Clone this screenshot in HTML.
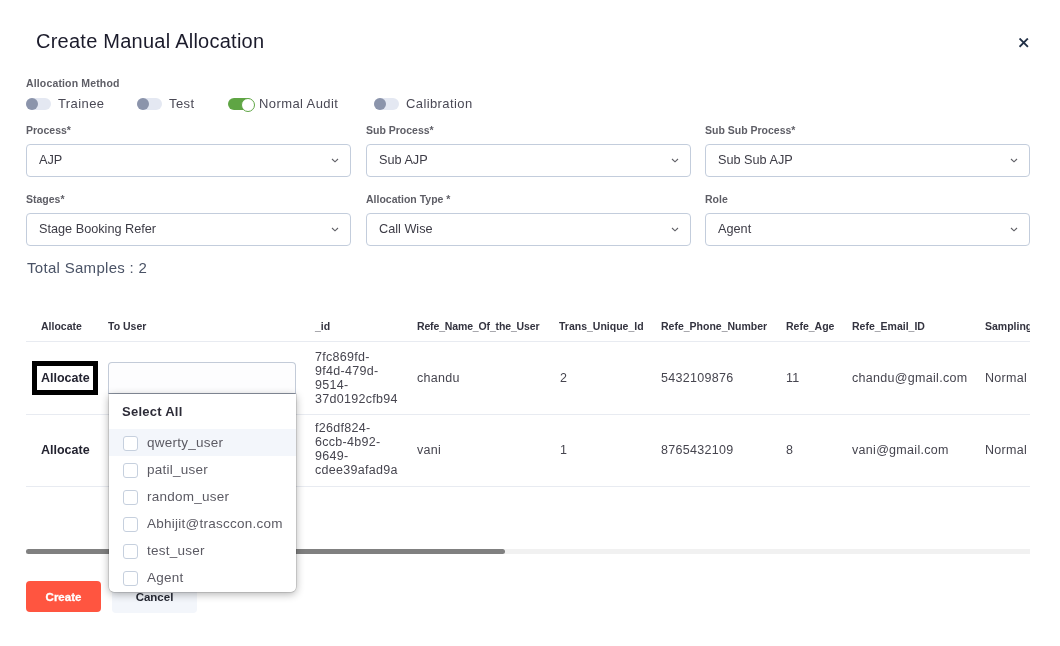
<!DOCTYPE html>
<html><head><meta charset="utf-8">
<style>
*{box-sizing:border-box;margin:0;padding:0}
html{background:#fff}
body{will-change:transform;background:transparent}
html,body{width:1060px;height:646px;overflow:hidden;font-family:"Liberation Sans",sans-serif;color:#333}
.abs{position:absolute;white-space:nowrap}
.title{left:36px;top:30px;font-size:20px;letter-spacing:.25px;color:#1b1b2b;line-height:22px}
.close{left:1019px;top:38px;width:10px;height:10px}
.lbl{font-size:10.5px;font-weight:bold;color:#5e5e66;line-height:13px}
.tog{position:absolute;width:25px;height:12px;border-radius:6px;background:#e4e8f2}
.tog::after{content:"";position:absolute;left:0;top:0;width:12px;height:12px;border-radius:50%;background:#8b94ab}
.tog.on{background:#5fa544}
.tog.on::after{left:13px;background:#fff;border:1px solid #5fa544;}
.tlab{font-size:13px;letter-spacing:.4px;color:#4a4955;line-height:15px}
.sel{position:absolute;height:33px;border:1px solid #c3cddc;border-radius:4px;background:#fff}
.sel span{position:absolute;left:12px;top:8px;font-size:12.7px;color:#3d3c46;line-height:15px}
.sel svg{position:absolute;right:11px;top:13px}
.total{left:27px;top:259px;font-size:15px;letter-spacing:.3px;color:#4a5366;line-height:17px}
.th{font-size:10.5px;font-weight:bold;color:#33333f;line-height:12px;top:320px}
.hline{position:absolute;left:26px;width:1004px;height:1px;background:#e8ebf1}
.td{font-size:12.5px;letter-spacing:.3px;color:#46454f;line-height:14px}
.alloc{font-size:12.5px;font-weight:bold;color:#232330;line-height:14px}
.item{position:absolute;left:14px;height:15px;width:170px}
.item i{position:absolute;left:0;top:0;width:15px;height:15px;border:1px solid #c6d0de;border-radius:3px;background:#fff}
.item span{position:absolute;left:24px;top:-1px;font-size:13.5px;letter-spacing:.25px;color:#5b5a63;line-height:16px;white-space:nowrap}
</style></head><body>
<div class="abs title">Create Manual Allocation</div>
<svg class="abs close" viewBox="0 0 10 10"><path d="M1.2 1.2L8.2 8.2M8.2 1.2L1.2 8.2" stroke="#223046" stroke-width="1.9" stroke-linecap="square"/></svg>

<div class="abs lbl" style="left:26px;top:77px;letter-spacing:.15px">Allocation Method</div>
<div class="tog" style="left:26px;top:98px"></div><div class="abs tlab" style="left:58px;top:96px">Trainee</div>
<div class="tog" style="left:137px;top:98px"></div><div class="abs tlab" style="left:169px;top:96px">Test</div>
<div class="tog on" style="left:228px;top:98px"></div><div class="abs tlab" style="left:259px;top:96px">Normal Audit</div>
<div class="tog" style="left:374px;top:98px"></div><div class="abs tlab" style="left:406px;top:96px">Calibration</div>

<div class="abs lbl" style="left:26px;top:124px">Process*</div>
<div class="abs lbl" style="left:366px;top:124px">Sub Process*</div>
<div class="abs lbl" style="left:705px;top:124px">Sub Sub Process*</div>
<div class="sel" style="left:26px;top:144px;width:325px"><span>AJP</span><svg width="8" height="5" viewBox="0 0 8 5"><path d="M1 1L4 3.8L7 1" fill="none" stroke="#606066" stroke-width="1.15"/></svg></div>
<div class="sel" style="left:366px;top:144px;width:325px"><span>Sub AJP</span><svg width="8" height="5" viewBox="0 0 8 5"><path d="M1 1L4 3.8L7 1" fill="none" stroke="#606066" stroke-width="1.15"/></svg></div>
<div class="sel" style="left:705px;top:144px;width:325px"><span>Sub Sub AJP</span><svg width="8" height="5" viewBox="0 0 8 5"><path d="M1 1L4 3.8L7 1" fill="none" stroke="#606066" stroke-width="1.15"/></svg></div>

<div class="abs lbl" style="left:26px;top:193px">Stages*</div>
<div class="abs lbl" style="left:366px;top:193px">Allocation Type *</div>
<div class="abs lbl" style="left:705px;top:193px">Role</div>
<div class="sel" style="left:26px;top:213px;width:325px"><span>Stage Booking Refer</span><svg width="8" height="5" viewBox="0 0 8 5"><path d="M1 1L4 3.8L7 1" fill="none" stroke="#606066" stroke-width="1.15"/></svg></div>
<div class="sel" style="left:366px;top:213px;width:325px"><span>Call Wise</span><svg width="8" height="5" viewBox="0 0 8 5"><path d="M1 1L4 3.8L7 1" fill="none" stroke="#606066" stroke-width="1.15"/></svg></div>
<div class="sel" style="left:705px;top:213px;width:325px"><span>Agent</span><svg width="8" height="5" viewBox="0 0 8 5"><path d="M1 1L4 3.8L7 1" fill="none" stroke="#606066" stroke-width="1.15"/></svg></div>

<div class="abs total">Total Samples : 2</div>

<!-- table -->
<div class="abs th" style="left:41px">Allocate</div>
<div class="abs th" style="left:108px">To User</div>
<div class="abs th" style="left:315px">_id</div>
<div class="abs th" style="left:417px;letter-spacing:-.15px">Refe_Name_Of_the_User</div>
<div class="abs th" style="left:559px">Trans_Unique_Id</div>
<div class="abs th" style="left:661px">Refe_Phone_Number</div>
<div class="abs th" style="left:786px">Refe_Age</div>
<div class="abs th" style="left:852px">Refe_Email_ID</div>
<div class="abs th" style="left:985px;width:45px;overflow:hidden">Sampling</div>
<div class="hline" style="top:341px"></div>
<div class="hline" style="top:414px"></div>
<div class="hline" style="top:486px"></div>

<!-- row 1 -->
<div class="abs" style="left:32px;top:361px;width:66px;height:34px;border:5px solid #000;background:#fff"></div>
<div class="abs alloc" style="left:41px;top:371px">Allocate</div>
<div class="abs" style="left:108px;top:362px;width:188px;height:32px;border:1px solid #c3cbd8;border-bottom-color:#9aa3b2;border-radius:4px 4px 0 0;background:#fdfdfe"></div>
<div class="abs td" style="left:315px;top:350px;line-height:14px">7fc869fd-<br>9f4d-479d-<br>9514-<br>37d0192cfb94</div>
<div class="abs td" style="left:417px;top:371px">chandu</div>
<div class="abs td" style="left:560px;top:371px">2</div>
<div class="abs td" style="left:661px;top:371px">5432109876</div>
<div class="abs td" style="left:786px;top:371px">11</div>
<div class="abs td" style="left:852px;top:371px">chandu@gmail.com</div>
<div class="abs td" style="left:985px;top:371px">Normal</div>
<!-- row 2 -->
<div class="abs alloc" style="left:41px;top:443px">Allocate</div>
<div class="abs td" style="left:315px;top:421px;line-height:14px">f26df824-<br>6ccb-4b92-<br>9649-<br>cdee39afad9a</div>
<div class="abs td" style="left:417px;top:443px">vani</div>
<div class="abs td" style="left:560px;top:443px">1</div>
<div class="abs td" style="left:661px;top:443px">8765432109</div>
<div class="abs td" style="left:786px;top:443px">8</div>
<div class="abs td" style="left:852px;top:443px">vani@gmail.com</div>
<div class="abs td" style="left:985px;top:443px">Normal</div>

<!-- scrollbar -->
<div class="abs" style="left:26px;top:549px;width:1004px;height:5px;background:#f1f1f1"></div>
<div class="abs" style="left:26px;top:549px;width:479px;height:5px;background:#808080;border-radius:3px"></div>

<!-- buttons -->
<div class="abs btn" style="left:26px;top:581px;width:75px;height:31px;background:#ff5540;border-radius:4px;color:#fff;-webkit-text-stroke:.3px #fff;font-weight:bold;font-size:11.5px;line-height:32px;text-align:center">Create</div>
<div class="abs btn" style="left:112px;top:581px;width:85px;height:32px;background:#f3f6fb;border-radius:4px;color:#272a35;font-weight:bold;font-size:11.5px;line-height:33px;text-align:center">Cancel</div>

<!-- dropdown -->
<div class="abs dd" style="left:109px;top:394px;width:187px;height:198px;background:#fff;border-radius:0 0 5px 5px;box-shadow:0 0 0 .5px rgba(0,0,0,.22),0 2px 9px rgba(0,0,0,.32)">
  <div class="abs" style="left:13px;top:10px;font-size:13px;letter-spacing:.25px;font-weight:bold;color:#2d2c38;line-height:15px">Select All</div>
  <div class="abs" style="left:0;top:35px;width:187px;height:27px;background:#f3f6fb"></div>
  <div class="item" style="top:42px"><i></i><span>qwerty_user</span></div>
  <div class="item" style="top:69px"><i></i><span>patil_user</span></div>
  <div class="item" style="top:96px"><i></i><span>random_user</span></div>
  <div class="item" style="top:123px"><i></i><span>Abhijit@trasccon.com</span></div>
  <div class="item" style="top:150px"><i></i><span>test_user</span></div>
  <div class="item" style="top:177px"><i></i><span>Agent</span></div>
</div>
</body></html>
